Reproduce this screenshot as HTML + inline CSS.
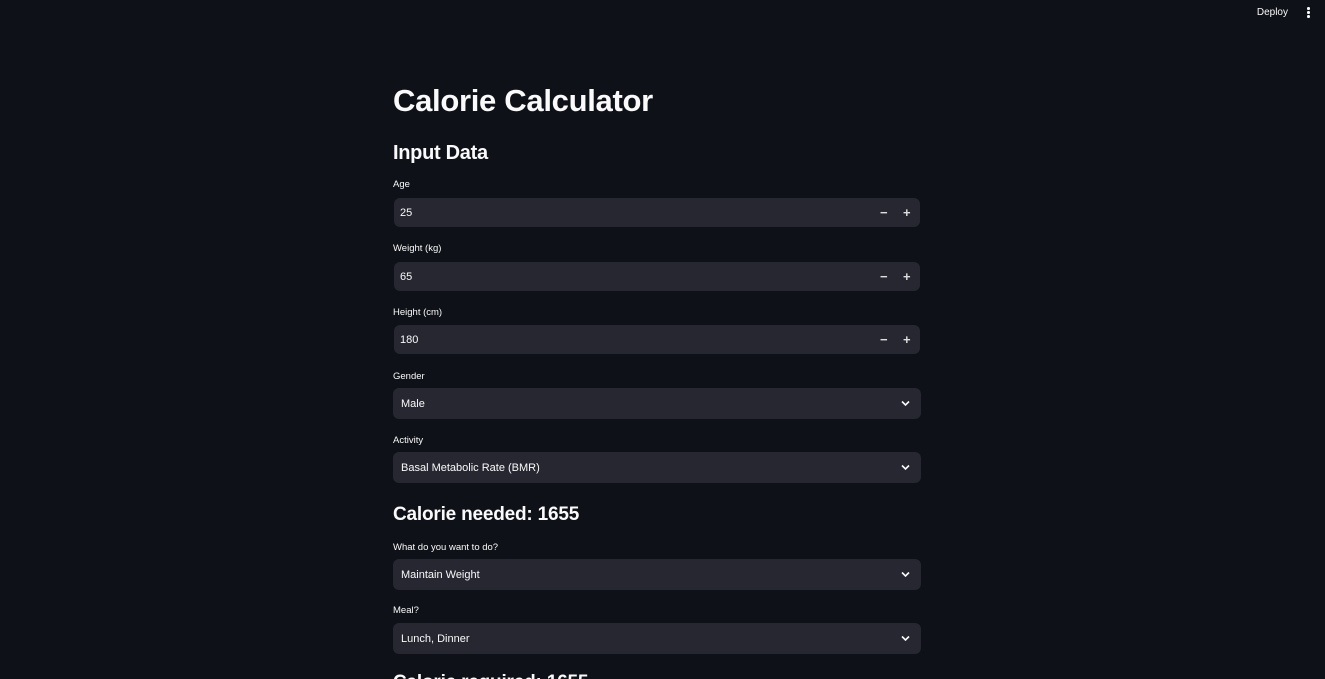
<!DOCTYPE html><html style="overflow:hidden;height:679px"><head><style>
body{margin:0;width:1325px;height:679px;background:#0e1117;overflow:hidden;font-family:"Liberation Sans",sans-serif;color:#fafafa;position:relative}
.a{position:absolute}
.t{left:393px;top:83px;font-size:31px;font-weight:bold;letter-spacing:-0.3px}
.h{left:393px;font-size:19px;font-weight:bold;letter-spacing:-0.2px}
.l{left:393px;font-size:9.5px;color:#fafafa}
.n{left:394px;width:526px;height:29px;background:#262730;border-radius:6px;font-size:11px}
.n span{position:absolute;left:6px;top:9px}
.n i{position:absolute;top:7px;font-style:normal;font-size:13px;font-weight:bold;color:#ddd}
.s{left:393px;width:528px;height:31px;background:#262730;border-radius:6px;font-size:11px}
.s span{position:absolute;left:8px;top:10px}
.s svg{position:absolute;right:11px;top:12px}
</style></head><body>
<div class="a" style="right:37px;top:7px;font-size:10px">Deploy</div>
<div class="a" style="left:1307px;top:7px;width:3px">
<div style="width:2.5px;height:2.5px;background:#fafafa;border-radius:50%;margin-bottom:1.5px"></div><div style="width:2.5px;height:2.5px;background:#fafafa;border-radius:50%;margin-bottom:1.5px"></div><div style="width:2.5px;height:2.5px;background:#fafafa;border-radius:50%"></div></div>
<div class="a t">Calorie Calculator</div>
<div class="a h" style="top:142px;font-size:20px;letter-spacing:-0.3px">Input Data</div>
<div class="a l" style="top:179px">Age</div>
<div class="a n" style="top:198px"><span>25</span><i style="left:486px">−</i><i style="left:509px">+</i></div>
<div class="a l" style="top:243px">Weight (kg)</div>
<div class="a n" style="top:262px"><span>65</span><i style="left:486px">−</i><i style="left:509px">+</i></div>
<div class="a l" style="top:307px">Height (cm)</div>
<div class="a n" style="top:325px"><span>180</span><i style="left:486px">−</i><i style="left:509px">+</i></div>
<div class="a l" style="top:371px">Gender</div>
<div class="a s" style="top:388px"><span>Male</span><svg width="9" height="7" viewBox="0 0 9 7"><path d="M1 1.5l3.5 3.5 3.5-3.5" stroke="#fafafa" stroke-width="1.6" fill="none"/></svg></div>
<div class="a l" style="top:435px">Activity</div>
<div class="a s" style="top:452px"><span>Basal Metabolic Rate (BMR)</span><svg width="9" height="7" viewBox="0 0 9 7"><path d="M1 1.5l3.5 3.5 3.5-3.5" stroke="#fafafa" stroke-width="1.6" fill="none"/></svg></div>
<div class="a h" style="top:504px">Calorie needed: 1655</div>
<div class="a l" style="top:542px">What do you want to do?</div>
<div class="a s" style="top:559px"><span>Maintain Weight</span><svg width="9" height="7" viewBox="0 0 9 7"><path d="M1 1.5l3.5 3.5 3.5-3.5" stroke="#fafafa" stroke-width="1.6" fill="none"/></svg></div>
<div class="a l" style="top:605px">Meal?</div>
<div class="a s" style="top:623px"><span>Lunch, Dinner</span><svg width="9" height="7" viewBox="0 0 9 7"><path d="M1 1.5l3.5 3.5 3.5-3.5" stroke="#fafafa" stroke-width="1.6" fill="none"/></svg></div>
<div class="a h" style="top:672px">Calorie required: 1655</div>
</body></html>
